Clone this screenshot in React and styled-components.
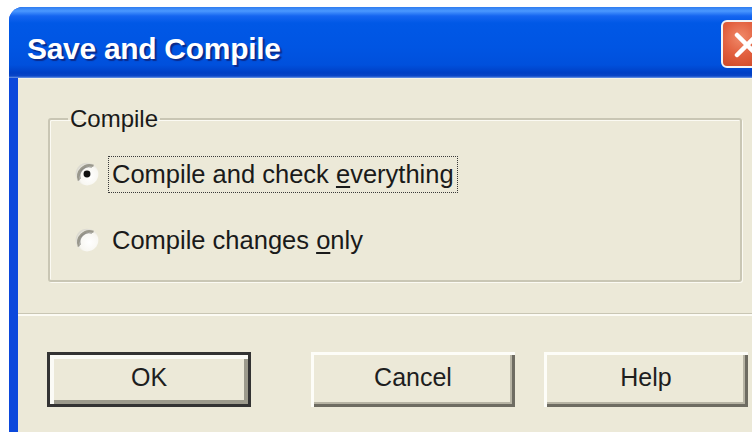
import React from "react";
import styled, { createGlobalStyle } from "styled-components";

const Global = createGlobalStyle`
  html, body { margin: 0; padding: 0; background: #ffffff; }
  body { width: 752px; height: 432px; overflow: hidden; }
  #root { width: 752px; height: 432px; }
`;

const Page = styled.div`
  width: 752px;
  height: 432px;
  padding: 7px 0 0 9px;
  box-sizing: border-box;
  overflow: hidden;
  background: #ffffff;
`;

const Window = styled.div`
  width: 760px;
  height: 440px;
  display: flex;
  flex-direction: column;
  border-top-left-radius: 14px;
  overflow: hidden;
  background: #0b48dc;
`;

const TitleBar = styled.div`
  height: 71px;
  flex: none;
  display: flex;
  align-items: center;
  justify-content: space-between;
  padding: 12px 0 0 18px;
  box-sizing: border-box;
  background: linear-gradient(
    to bottom,
    #2e7cf0 0px,
    #4a98ff 4px,
    #1565f0 9px,
    #0058e6 16px,
    #0055e3 40px,
    #0050dc 58px,
    #003fc4 66px,
    #0a46c8 69px,
    #6f9ae8 71px
  );
`;

const Title = styled.span`
  font-family: "Liberation Sans", Arial, sans-serif;
  font-weight: bold;
  font-size: 30px;
  letter-spacing: -0.3px;
  color: #ffffff;
  text-shadow: 2px 2px 1px #0b2a8a;
`;

const CloseButton = styled.div`
  width: 48px;
  height: 48px;
  margin-right: 0;
  margin-bottom: 10px;
  border: 2px solid #f4f4f4;
  border-radius: 6px;
  box-sizing: border-box;
  background: radial-gradient(circle at 40% 35%, #f08a6a 0%, #e2603f 45%, #c8421f 100%);
  display: flex;
  align-items: center;
  padding-left: 8px;
`;

const Body = styled.div`
  flex: 1;
  margin-left: 9px;
  background: #ece9d8;
  border-top: 1px solid #f4f2e8;
  padding: 26px 0 0 0;
  box-sizing: border-box;
  font-family: "Liberation Sans", Arial, sans-serif;
  color: #1a1a1a;
`;

const Group = styled.fieldset`
  margin: 0 0 0 30px;
  width: 694px;
  height: 177px;
  box-sizing: border-box;
  padding: 26px 0 0 24px;
  border: 2px solid #c9c6b4;
  border-radius: 3px;
  box-shadow: inset 1px 1px 0 #fbfaf3, 1px 1px 0 #fbfaf3;
  display: flex;
  flex-direction: column;
  gap: 36px;
`;

const Legend = styled.legend`
  font-size: 24px;
  line-height: 28px;
  padding: 0 2px;
  margin-left: -6px;
  color: #1a1a1a;
`;

const Option = styled.label`
  display: flex;
  align-items: center;
  gap: 8px;
  font-size: 25.5px;
  height: 30px;
`;

const OptionText = styled.span`
  padding: 3px 3px;
  border: 1px dotted ${(p) => (p.$focused ? "#3a3a3a" : "transparent")};
`;

const Key = styled.span`
  text-decoration: underline;
  text-underline-offset: 3px;
`;

const Separator = styled.div`
  margin-top: 31px;
  height: 1px;
  background: #c9c6b4;
  border-bottom: 2px solid #fcfbf4;
`;

const ButtonRow = styled.div`
  display: flex;
  padding: 36px 0 0 29px;
`;

const Button = styled.button`
  width: 204px;
  height: 55px;
  margin-left: ${(p) => p.$gap || 0}px;
  box-sizing: border-box;
  font-family: "Liberation Sans", Arial, sans-serif;
  font-size: 25px;
  color: #1e1e1e;
  background: #ece9d8;
  border: none;
  padding: 0 0 4px;
  box-shadow: ${(p) =>
    p.$default
      ? "inset 0 0 0 3px #333, inset 3px 3px 0 4px #fbfbf6, inset -3px -3px 0 4px #9c9a8c"
      : "inset 3px 3px 0 0 #fdfdf8, inset -3px -3px 0 0 #6e6c62, inset -5px -5px 0 0 #b7b4a4"};
`;

const Radio = ({ checked }) => (
  <svg width="26" height="26" viewBox="0 0 24 24" style={{ flex: "none" }}>
    <defs>
      <radialGradient id="rg" cx="60%" cy="60%" r="60%">
        <stop offset="0%" stopColor="#ffffff" />
        <stop offset="70%" stopColor="#f8f7f2" />
        <stop offset="100%" stopColor="#dcdad0" />
      </radialGradient>
    </defs>
    <circle cx="12" cy="12" r="10.5" fill="url(#rg)" />
    <path d="M4.5 18 A10.5 10.5 0 0 1 18 4.5" fill="none" stroke="#9a988c" strokeWidth="2" />
    <path d="M5.8 16.5 A8.5 8.5 0 0 1 16.5 5.8" fill="none" stroke="#3a3a36" strokeWidth="1.1" opacity="0.5" />
    {checked && <circle cx="12" cy="12" r="3.2" fill="#111" />}
  </svg>
);

const CloseIcon = () => (
  <svg width="30" height="30" viewBox="0 0 30 30">
    <path d="M6 6 L26 26 M26 6 L6 26" stroke="#ffffff" strokeWidth="4.5" strokeLinecap="round" />
  </svg>
);

export default function App() {
  return (
    <>
      <Global />
      <Page>
        <Window>
          <TitleBar>
            <Title>Save and Compile</Title>
            <CloseButton>
              <CloseIcon />
            </CloseButton>
          </TitleBar>
          <Body>
            <Group>
              <Legend>Compile</Legend>
              <Option>
                <Radio checked />
                <OptionText $focused>
                  Compile and check <Key>e</Key>verything
                </OptionText>
              </Option>
              <Option>
                <Radio />
                <OptionText>
                  Compile changes <Key>o</Key>nly
                </OptionText>
              </Option>
            </Group>
            <Separator />
            <ButtonRow>
              <Button $default>OK</Button>
              <Button $gap={60}>Cancel</Button>
              <Button $gap={29}>Help</Button>
            </ButtonRow>
          </Body>
        </Window>
      </Page>
    </>
  );
}
